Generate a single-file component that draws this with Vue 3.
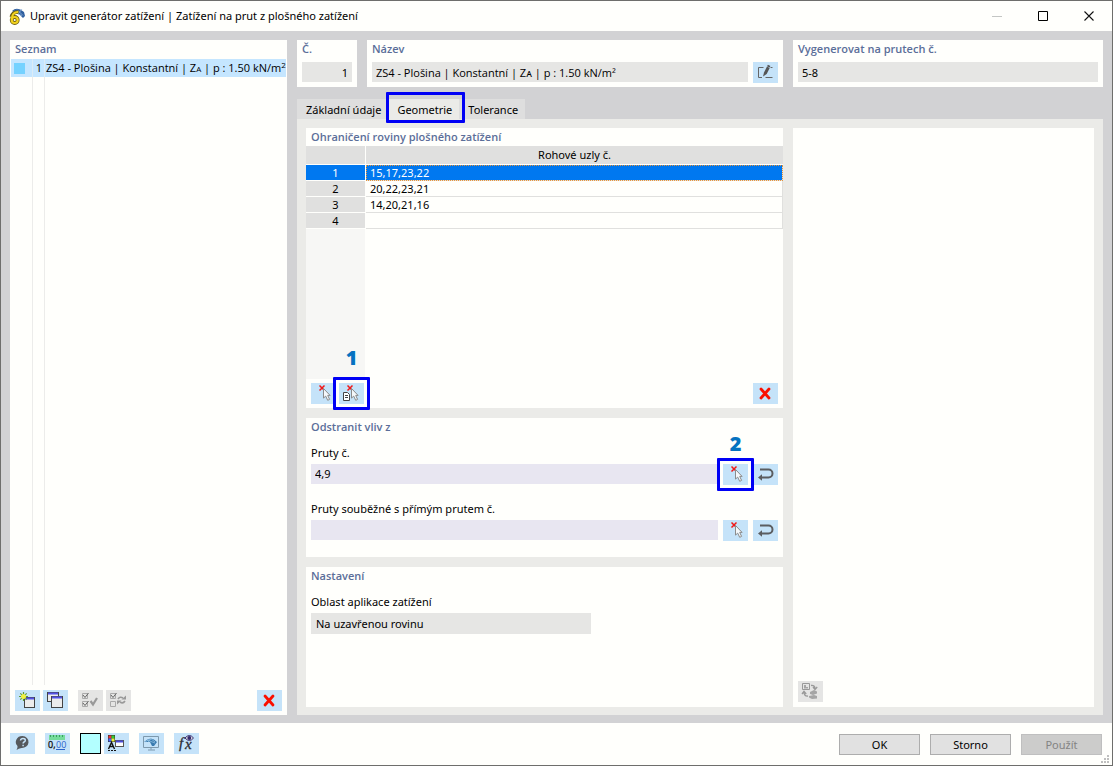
<script setup>
import { ref } from 'vue'

const no = ref('1')
const name = ref('ZS4 - Plošina | Konstantní | Zᴀ | p : 1.50 kN/m²')
const members = ref('5-8')
const influence = ref('4,9')
const parallel = ref('')
const selected = ref(0)
const rows = ref(['15,17,23,22', '20,22,23,21', '14,20,21,16', ''])
</script>

<template>
  <div class="window">
    <svg class="symbols" aria-hidden="true">
      <symbol id="pick" viewBox="0 0 25 21">
        <path d="M8.500 2.500l5 5M13.500 2.500l-5 5" stroke="#f01818" stroke-width="1.500" />
        <path d="M12.500 5.500v9.600l2.200-2 2 4.200 1.900-.9-1.900-4h2.400z" fill="#f4f8fb" stroke="#8b8b8b" stroke-width="1" />
      </symbol>
      <symbol id="remove" viewBox="0 0 25 21">
        <path d="M8 6l8 9M16 6l-8 9" stroke="#fa0f00" stroke-width="2.800" stroke-linecap="round" />
      </symbol>
      <symbol id="back" viewBox="0 0 25 21">
        <path d="M7 5.500h8.500a3.700 3.700 0 0 1 0 8H7" fill="none" stroke="#5b5d60" stroke-width="2" />
        <path d="M5 13.500l4-3.200v6.400z" fill="#5b5d60" />
      </symbol>
    </svg>

    <header class="titlebar">
      <svg class="logo" viewBox="0 0 16 17" aria-hidden="true">
        <path d="M3 3Q8-2 15 4l1 4-2 2-3-3z" fill="#2f5f9e" />
        <path d="M5 3l8 5M8 1.500l6 6M9 6l4-5" stroke="#8fb2da" stroke-width=".8" />
        <path d="M9.500 4Q3.500 3.700 2.300 9" fill="none" stroke="#6c5d12" stroke-width="3.600" />
        <circle cx="5.700" cy="12" r="3" fill="none" stroke="#6c5d12" stroke-width="3.800" />
        <path d="M9.300 4Q3.500 3.700 2.500 11" fill="none" stroke="#f2d21c" stroke-width="2" />
        <circle cx="5.700" cy="12" r="3" fill="none" stroke="#f2d21c" stroke-width="2.200" />
      </svg>
      <h1>Upravit generátor zatížení | Zatížení na prut z plošného zatížení</h1>
      <div class="controls">
        <button type="button" aria-label="Minimalizovat" disabled>
          <svg viewBox="0 0 11 11"><path d="M0 5.500h10" stroke="#c4c6c4" /></svg>
        </button>
        <button type="button" aria-label="Maximalizovat">
          <svg viewBox="0 0 11 11"><path d="M.5.5h9v9h-9z" fill="none" stroke="#000" /></svg>
        </button>
        <button type="button" aria-label="Zavřít">
          <svg viewBox="0 0 11 11"><path d="M.5.5l9 9M9.500.5l-9 9" stroke="#111" stroke-width="1.100" /></svg>
        </button>
      </div>
    </header>

    <main class="body">
      <aside class="panel sidebar">
        <h2>Seznam</h2>
        <ul class="list">
          <li>
            <button type="button" class="item">
              <span class="chip"></span>
              <span class="num">1</span>
              <span>ZS4 - Plošina | Konstantní | Z<small>A</small> | p : 1.50 kN/m<sup>2</sup></span>
            </button>
          </li>
        </ul>
        <div class="tools">
          <button type="button" class="icon" aria-label="Nový">
            <svg viewBox="0 0 25 21">
              <rect x="9.500" y="7.500" width="10" height="10" fill="#ececec" stroke="#444" />
              <path d="M10 8.500h9" stroke="#5252e6" stroke-width="2" />
              <path d="M8.500 2v9M4 6.500h9M5.300 3.300l6.400 6.400M11.700 3.300L5.300 9.700" stroke="#5f9b32" stroke-width="1.200" />
              <circle cx="8.500" cy="6.500" r="2.500" fill="#f0f040" />
            </svg>
          </button>
          <button type="button" class="icon" aria-label="Kopírovat">
            <svg viewBox="0 0 25 21">
              <rect x="4.500" y="2.500" width="11" height="9" fill="#ececec" stroke="#444" />
              <path d="M5 3.500h10" stroke="#5252e6" stroke-width="2" />
              <rect x="8.500" y="6.500" width="11" height="11" fill="#ececec" stroke="#444" />
              <path d="M9 7.500h10" stroke="#5252e6" stroke-width="2" />
            </svg>
          </button>
          <button type="button" class="icon spaced" aria-label="Vybrat vše" disabled>
            <svg viewBox="0 0 25 21" fill="none">
              <path d="M4.500 3.500h5v5h-5zM4.500 11.500h5v5h-5z" stroke="#aaa" />
              <path d="M5 5l2 2.500L10.500 3M5 13l2 2.500 3.500-4.500" stroke="#666" />
              <path d="M12.500 11l2.500 3.500L19 8" stroke="#999" stroke-width="2.200" />
            </svg>
          </button>
          <button type="button" class="icon" aria-label="Obrátit výběr" disabled>
            <svg viewBox="0 0 25 21" fill="none">
              <path d="M4.500 3.500h5v5h-5zM4.500 11.500h5v5h-5z" stroke="#aaa" />
              <path d="M5 5l2 2.500L10.500 3" stroke="#666" />
              <path d="M12 9q2-3 5-1M19 11q-2 3-5 1" stroke="#999" stroke-width="1.600" />
              <path d="M15.500 9.500h4.500v-4zM15.500 10.500H11v4z" fill="#999" />
            </svg>
          </button>
          <button type="button" class="icon end" aria-label="Odstranit"><svg viewBox="0 0 25 21"><use href="#remove" /></svg></button>
        </div>
      </aside>

      <section class="content">
        <div class="top">
          <div class="panel">
            <h2><label for="no">Č.</label></h2>
            <div class="row"><input id="no" v-model="no" class="right" readonly /></div>
          </div>
          <div class="panel">
            <h2><label for="name">Název</label></h2>
            <div class="row">
              <input id="name" v-model="name" />
              <button type="button" class="icon" aria-label="Upravit název">
                <svg viewBox="0 0 25 21" fill="none">
                  <path d="M10.500 5.500h-5v10H9M12.500 15.500h7M17.500 5.500h2" stroke="#666" />
                  <path d="M10 14.500l1-4 3-6 2.700 1.500-3 6z" fill="#555" />
                  <path d="M14.500 3.500l2.500 1.300" stroke="#555" stroke-width="1.800" />
                </svg>
              </button>
            </div>
          </div>
          <div class="panel">
            <h2><label for="members">Vygenerovat na prutech č.</label></h2>
            <div class="row"><input id="members" v-model="members" readonly /></div>
          </div>
        </div>

        <nav class="tabs" role="tablist">
          <button type="button" role="tab">Základní údaje</button>
          <button type="button" role="tab" class="active marked" aria-selected="true">Geometrie</button>
          <button type="button" role="tab">Tolerance</button>
        </nav>

        <div class="page">
          <div class="left">
            <section class="panel nodes">
              <h2>Ohraničení roviny plošného zatížení</h2>
              <div class="sheet">
                <table>
                  <thead>
                    <tr><th></th><th scope="col">Rohové uzly č.</th></tr>
                  </thead>
                  <tbody>
                    <tr v-for="(row, i) in rows" :key="i" :class="{ selected: i === selected }" @click="selected = i">
                      <th scope="row">{{ i + 1 }}</th>
                      <td>{{ row }}</td>
                    </tr>
                  </tbody>
                </table>
              </div>
              <div class="tools">
                <button type="button" class="icon" aria-label="Vybrat uzly"><svg viewBox="0 0 25 21"><use href="#pick" /></svg></button>
                <span class="marked">
                  <b class="step">1</b>
                  <button type="button" class="icon" aria-label="Vybrat více rovin">
                    <svg viewBox="0 0 25 21">
                      <use href="#pick" />
                      <path d="M4.500 9.500h4l2 2v6h-6z" fill="#fff" stroke="#444" />
                      <path d="M6 12.500h3M6 14.500h3" stroke="#444" />
                    </svg>
                  </button>
                </span>
                <button type="button" class="icon end" aria-label="Odstranit řádek"><svg viewBox="0 0 25 21"><use href="#remove" /></svg></button>
              </div>
            </section>

            <section class="panel">
              <h2>Odstranit vliv z</h2>
              <label class="caption" for="influence">Pruty č.</label>
              <div class="row">
                <input id="influence" v-model="influence" class="lilac" />
                <span class="marked">
                  <b class="step">2</b>
                  <button type="button" class="icon" aria-label="Vybrat pruty"><svg viewBox="0 0 25 21"><use href="#pick" /></svg></button>
                </span>
                <button type="button" class="icon" aria-label="Zpět"><svg viewBox="0 0 25 21"><use href="#back" /></svg></button>
              </div>
              <label class="caption next" for="parallel">Pruty souběžné s přímým prutem č.</label>
              <div class="row">
                <input id="parallel" v-model="parallel" class="lilac" />
                <button type="button" class="icon" aria-label="Vybrat přímý prut"><svg viewBox="0 0 25 21"><use href="#pick" /></svg></button>
                <button type="button" class="icon" aria-label="Zpět"><svg viewBox="0 0 25 21"><use href="#back" /></svg></button>
              </div>
            </section>

            <section class="panel">
              <h2>Nastavení</h2>
              <label class="caption" for="area">Oblast aplikace zatížení</label>
              <div class="row">
                <select id="area" disabled><option>Na uzavřenou rovinu</option></select>
              </div>
            </section>
          </div>

          <section class="panel preview">
            <button type="button" class="icon" aria-label="Přepnout náhled" disabled>
              <svg viewBox="0 0 25 21" fill="none">
                <path d="M4.500 2.500h7v6h-7z" stroke="#999" />
                <path d="M6 4h2v2h2v1.500H6zM12 11l4-2 3 1.500v2l-4 1.500-3-1zM11 15l5-1 3 1v2.500l-5 .5-3-1.500z" fill="#a5a5a5" />
                <path d="M13 4.500q4-.5 4 3M15 6l2 2.500L19.200 6M10 15q-4 .5-4-4M4 13l2-2.700L8.200 13" stroke="#999" stroke-width="1.300" />
              </svg>
            </button>
          </section>
        </div>
      </section>
    </main>

    <footer class="footer">
      <button type="button" class="icon" aria-label="Nápověda">
        <svg viewBox="0 0 25 21">
          <path d="M12.500 3a6.500 6 0 1 1-1 12q-3 .3-5 2 1.200-2 1-4A6.500 6 0 0 1 12.500 3z" fill="#55595d" />
          <path d="M10.500 7.500q.3-2 2.500-2t2.300 1.700q0 1.200-1.300 1.800-.9.500-.9 1.600M13.100 11.800v1.500" fill="none" stroke="#c5e3f9" stroke-width="1.500" />
        </svg>
      </button>
      <button type="button" class="icon" aria-label="Jednotky a desetinná místa">
        <svg viewBox="0 0 25 21">
          <path d="M4 2h16v5H4z" fill="#74dc9b" />
          <path d="M5.500 2v2M8.500 2v2M11.500 2v2M14.500 2v2M17.500 2v2" stroke="#3a9c60" />
          <text class="digits" x="3" y="15" fill="#111" stroke="#111">0,</text>
          <text class="digits" x="11" y="15" fill="#2b62c9">00</text>
          <path d="M11 16.500h9" stroke="#2b62c9" />
        </svg>
      </button>
      <button type="button" class="swatch" aria-label="Barva"></button>
      <button type="button" class="icon tight" aria-label="Vlastnosti zobrazení">
        <svg viewBox="0 0 25 21">
          <path d="M4 2h7v7H4z" fill="#333" />
          <path d="M4.500 2.500h3v3h-3z" fill="#e33" /><path d="M7.500 2.500h3v3h-3z" fill="#3c3" />
          <path d="M4.500 5.500h3v3h-3z" fill="#46f" /><path d="M7.500 5.500h3v3h-3z" fill="#ee3" />
          <path d="M4.500 16l3-6.500 3 6.500M5.500 13.500h4" fill="none" stroke="#111" stroke-width="1.400" />
          <path d="M4 17.500h8" stroke="#111" stroke-dasharray="2 1" />
          <rect x="11.500" y="7.500" width="8" height="6" fill="#fff" stroke="#555" />
          <path d="M12 8.500h7" stroke="#4a4ad8" stroke-width="2" />
        </svg>
      </button>
      <button type="button" class="icon" aria-label="Zobrazení">
        <svg viewBox="0 0 25 21" fill="none">
          <path d="M4.500 3.500h15v11h-15zM12 14.500v2M9 17h7" stroke="#7d99ad" />
          <path d="M5 9q7-7 13 0l-3 4h-2L11 9z" fill="#397bb0" />
          <path d="M8 7l8 3M11 5l5 4M6 9l5-3M9 9l4-4" stroke="#9cc8e6" stroke-width=".7" />
        </svg>
      </button>
      <button type="button" class="icon" aria-label="Vzorec">
        <svg viewBox="0 0 25 21">
          <text class="formula" x="5" y="15">f</text>
          <text class="formula" x="11" y="16">x</text>
          <path d="M11 5q4.500-5 8.500 0-4 5-8.500 0z" fill="#eee" stroke="#342a6e" />
          <circle cx="15.300" cy="5" r="2" fill="#342a6e" />
        </svg>
      </button>
      <div class="actions">
        <button type="button">OK</button>
        <button type="button">Storno</button>
        <button type="button" disabled>Použít</button>
      </div>
      <svg class="grip" viewBox="0 0 8 8" aria-hidden="true">
        <path d="M6 0h2v2H6zM3 3h2v2H3zM6 3h2v2H6zM0 6h2v2H0zM3 6h2v2H3zM6 6h2v2H6z" fill="#bfbfbf" />
      </svg>
    </footer>
  </div>
</template>

<style>
body { margin: 0; }
</style>

<style scoped>
* { box-sizing: border-box; }
.window {
  display: flex;
  flex-direction: column;
  min-height: 100vh;
  border: 1px solid #6e6e6c;
  background: #fffffc;
  color: #000;
  font: 11px/18px "Noto Sans", "Open Sans", sans-serif;
}
.symbols { position: absolute; width: 0; height: 0; }
button, input, select { margin: 0; border: 0; border-radius: 0; font: inherit; color: inherit; }
button { padding: 0; background: none; }
h1, h2, ul { margin: 0; padding: 0; }

.titlebar { display: flex; align-items: center; height: 30px; padding-left: 8px; }
.logo { width: 16px; height: 17px; }
h1 { margin-left: 5px; font-size: 11px; font-weight: 400; }
.controls { display: flex; margin-left: auto; }
.controls button { display: grid; place-items: center; width: 46px; height: 30px; }
.controls svg { width: 11px; height: 11px; }

.body { flex: 1; display: flex; gap: 10px; padding: 9px 9px 8px; background: #d2d2d4; }
.panel { background: #fffffc; min-width: 0; }
h2 { padding: 0 5px; font-family: "Open Sans", sans-serif; font-size: 11px; font-weight: 600; line-height: 18px; color: #5b6e99; }

.sidebar { display: flex; flex-direction: column; flex: 0 0 277px; }
.list {
  flex: 1;
  margin: 1px 1px 5px;
  list-style: none;
  background:
    linear-gradient(#ececea, #ececea) 21px 0 / 1px 100% no-repeat,
    linear-gradient(#ececea, #ececea) 33px 0 / 1px 100% no-repeat;
}
.item {
  display: flex;
  width: 100%;
  height: 18px;
  padding-left: 3px;
  align-items: center;
  text-align: left;
  white-space: nowrap;
  font-family: "Open Sans", sans-serif;
  background:
    linear-gradient(#dcecf6, #dcecf6) 21px 0 / 1px 100% no-repeat,
    linear-gradient(#dcecf6, #dcecf6) 33px 0 / 1px 100% no-repeat,
    #c5e6ff;
}
.chip { flex: none; width: 11px; height: 11px; background: #75d2ff; }
.num { flex: none; width: 17px; margin-right: 4px; text-align: right; }
small { font-size: 8px; }
sup { font-size: 8px; line-height: 0; vertical-align: 4px; }
#name { font-family: "Open Sans", "Noto Sans", sans-serif; }

.tools { display: flex; gap: 3px; padding: 0 5px 4px; }
.icon { flex: none; width: 25px; height: 21px; background: #c5e3f9; }
.icon:disabled { background: #e5e5e4; }
.icon svg { display: block; width: 25px; height: 21px; }
.digits { font: 9px "Open Sans", sans-serif; stroke-width: 0.3px; }
.formula { font: italic 15px "Liberation Serif", serif; fill: #2c2c30; stroke: #2c2c30; stroke-width: 0.3px; }
.spaced { margin-left: 7px; }
.end { margin-left: auto; }

.content { flex: 1; display: flex; flex-direction: column; min-width: 0; }
.top { display: grid; grid-template-columns: 60px 1fr 310px; gap: 10px; }
.row { display: flex; align-items: flex-start; gap: 5px; padding: 0 5px; }
.top .row { margin-top: 4px; padding-bottom: 4px; min-height: 25px; }
input { flex: 1; min-width: 0; width: 0; height: 20px; padding: 0 4px; background: #e6e6e4; }
.right { text-align: right; }
.lilac { background: #e8e6f1; }

.tabs { display: flex; margin-top: 12px; }
.tabs button { height: 20px; padding: 2px 7px 0 9px; background: #dedede; line-height: 18px; }
.tabs .active { background: #ebebe8; }
.tabs .marked { z-index: 1; }
.marked { position: relative; display: flex; }
.marked::after { content: ""; position: absolute; inset: -6px; border: 3px solid #0000f5; border-radius: 1px; pointer-events: none; z-index: 1; }
.tabs .marked::after { inset: -7px -6px -4px -2px; }
.step {
  position: absolute;
  left: 0;
  right: 0;
  bottom: 27px;
  text-align: center;
  font: 800 20px/28px "Open Sans", sans-serif;
  color: #0672c0;
}
.tools .step { bottom: 32px; }

.page { flex: 1; display: grid; grid-template-columns: 1fr 301px; gap: 10px; padding: 9px 9px 8px; background: #ebebe8; }
.left { display: grid; grid-template-rows: 2fr 1fr 1fr; gap: 10px; min-width: 0; }
.nodes { display: flex; flex-direction: column; }
.sheet { flex: 1; margin-bottom: 4px; background: linear-gradient(#f7f7f5, #f7f7f5) 0 0 / 59px 100% no-repeat; }
table { width: 100%; border-collapse: separate; border-spacing: 0; table-layout: fixed; line-height: 15px; }
th, td { height: 16px; padding: 0; border-bottom: 1px solid #e0e0de; font-weight: 400; }
th { background: #e0e0df; border-color: #fffffc; }
th:first-child { width: 60px; border-right: 1px solid #fffffc; }
thead th { height: 19px; line-height: 18px; }
td { padding-left: 4px; border-right: 1px solid #e0e0de; }
.selected th, .selected td { background: #0078f0; color: #fff; }
.selected td { outline: 1px dotted #e8963c; outline-offset: -1px; background-clip: padding-box; }

.caption { display: block; margin: 8px 5px 2px; }
.caption.next { margin-top: 15px; }
select { width: 280px; height: 21px; padding: 0 5px; background: #e6e6e4; appearance: none; opacity: 1; }
.preview { display: flex; align-items: flex-end; padding: 5px; }

.footer { position: relative; display: flex; align-items: flex-start; gap: 10px; padding: 10px 10px 10px 9px; }
.swatch { width: 21px; height: 21px; border: 1px solid #000; background: #b3ffff; }
.tight { margin-left: -7px; }
.actions { display: flex; gap: 10px; margin: 1px 0 0 auto; }
.actions button { width: 81px; height: 21px; border: 1px solid #adadad; background: #e1e1e1; }
.actions button:disabled { border-color: #bfbfbf; background: #cccccb; color: #838383; }
.grip { position: absolute; right: 3px; bottom: 2px; width: 8px; height: 8px; }
</style>
